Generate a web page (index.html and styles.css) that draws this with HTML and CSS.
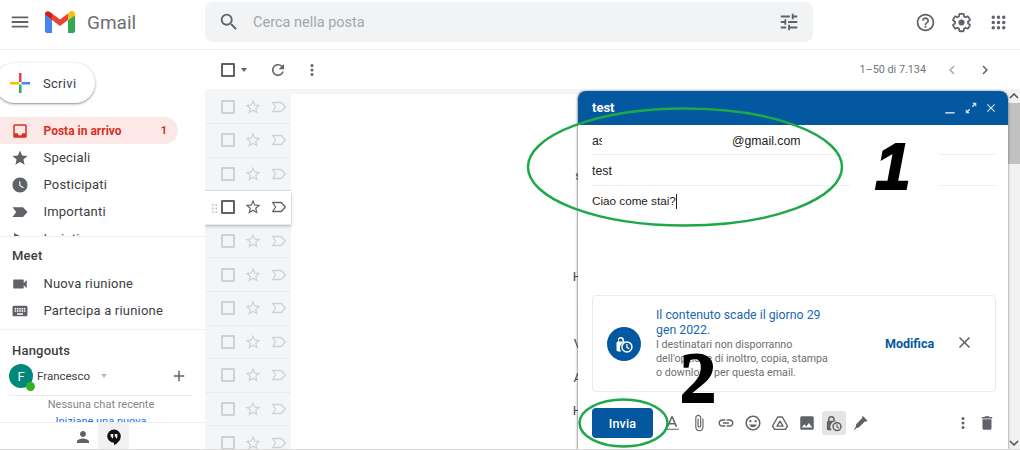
FILE: index.html
```html
<!DOCTYPE html>
<html lang="it">
<head>
<meta charset="utf-8">
<title>Gmail</title>
<link rel="stylesheet" href="styles.css">
</head>
<body>
<svg class="defs" width="0" height="0" aria-hidden="true">
  <symbol id="i-star" viewBox="0 0 24 24"><path d="M22 9.24l-7.19-.62L12 2 9.19 8.63 2 9.24l5.46 4.73L5.82 21 12 17.27 18.18 21l-1.63-7.03L22 9.24zM12 15.4l-3.76 2.27 1-4.28-3.32-2.88 4.38-.38L12 6.1l1.71 4.04 4.38.38-3.32 2.88 1 4.28L12 15.4z"/></symbol>
  <symbol id="i-label" viewBox="0 0 24 24"><path d="M3.5 6H15l5.5 6-5.500 6H3.500l4-6z" fill="none" stroke="currentColor" stroke-width="1.7" stroke-linejoin="round"/></symbol>
</svg>

<header class="topbar">
  <div class="brand">
    <svg class="ic menu" viewBox="0 0 24 24"><path d="M3 18h18v-2H3v2zm0-5h18v-2H3v2zm0-7v2h18V6H3z"/></svg>
    <svg class="logo" viewBox="0 0 30 22">
      <path fill="#4285f4" d="M2 22h5V9L0 4v16a2 2 0 0 0 2 2z"/>
      <path fill="#34a853" d="M23 22h5a2 2 0 0 0 2-2V4l-7 5z"/>
      <path fill="#ea4335" d="M7 9l8 6 8-6V2.500l-8 6-8-6z"/>
      <path fill="#fbbc04" d="M23 2.500V9l7-5V3c0-2.500-3-4-5-2.500z"/>
      <path fill="#c5221f" d="M0 4l7 5V2.500L5 1C3-.5 0 .5 0 3z"/>
    </svg>
    <span class="wordmark">Gmail</span>
  </div>
  <div class="search">
    <svg class="ic" viewBox="0 0 24 24"><path d="M15.500 14h-.79l-.28-.27A6.471 6.471 0 0 0 16 9.500 6.500 6.500 0 1 0 9.500 16c1.610 0 3.090-.59 4.230-1.570l.27.28v.79l5 4.990L20.490 19l-4.990-5zm-6 0C7.010 14 5 11.990 5 9.500S7.010 5 9.500 5 14 7.010 14 9.500 11.990 14 9.500 14z"/></svg>
    <span class="search-text">Cerca nella posta</span>
    <svg class="ic tune" viewBox="0 0 24 24"><path d="M3 17v2h6v-2H3zM3 5v2h10V5H3zm10 16v-2h8v-2h-8v-2h-2v6h2zM7 9v2H3v2h4v2h2V9H7zm14 4v-2H11v2h10zm-6-4h2V7h4V5h-4V3h-2v6z"/></svg>
  </div>
  <div class="top-actions">
    <svg class="ic" viewBox="0 0 24 24"><path d="M11 18h2v-2h-2v2zm1-16C6.480 2 2 6.480 2 12s4.480 10 10 10 10-4.480 10-10S17.520 2 12 2zm0 18c-4.410 0-8-3.590-8-8s3.590-8 8-8 8 3.590 8 8-3.590 8-8 8zm0-14c-2.210 0-4 1.790-4 4h2c0-1.100.9-2 2-2s2 .9 2 2c0 2-3 1.750-3 5h2c0-2.250 3-2.500 3-5 0-2.210-1.790-4-4-4z"/></svg>
    <svg class="ic" viewBox="0 0 24 24"><path fill="none" stroke="currentColor" stroke-width="2" d="M19.430 12.980c.04-.32.07-.64.07-.98s-.03-.66-.07-.98l2.110-1.650c.19-.15.24-.42.12-.64l-2-3.460c-.12-.22-.39-.3-.61-.22l-2.490 1c-.52-.4-1.080-.73-1.690-.98l-.38-2.650C14.460 2.180 14.250 2 14 2h-4c-.25 0-.46.18-.49.42l-.38 2.650c-.61.25-1.170.59-1.690.98l-2.490-1c-.23-.09-.49 0-.61.22l-2 3.460c-.13.22-.07.49.12.64l2.110 1.650c-.04.32-.07.65-.07.98s.03.66.07.98l-2.110 1.650c-.19.15-.24.42-.12.64l2 3.460c.12.22.39.3.61.22l2.490-1c.52.4 1.080.73 1.690.98l.38 2.650c.03.24.24.42.49.42h4c.25 0 .46-.18.49-.42l.38-2.650c.61-.25 1.170-.59 1.690-.98l2.490 1c.23.09.49 0 .61-.22l2-3.460c.12-.22.07-.49-.12-.64l-2.110-1.650z"/><circle cx="12" cy="12" r="3.500"/></svg>
    <svg class="ic" viewBox="0 0 24 24"><path d="M6 8a2 2 0 1 0 0-4 2 2 0 0 0 0 4zm6 0a2 2 0 1 0 0-4 2 2 0 0 0 0 4zm6 0a2 2 0 1 0 0-4 2 2 0 0 0 0 4zM6 14a2 2 0 1 0 0-4 2 2 0 0 0 0 4zm6 0a2 2 0 1 0 0-4 2 2 0 0 0 0 4zm6 0a2 2 0 1 0 0-4 2 2 0 0 0 0 4zM6 20a2 2 0 1 0 0-4 2 2 0 0 0 0 4zm6 0a2 2 0 1 0 0-4 2 2 0 0 0 0 4zm6 0a2 2 0 1 0 0-4 2 2 0 0 0 0 4z"/></svg>
  </div>
</header>

<div class="app">
  <aside class="sidebar">
    <div class="nav">
      <button class="compose-btn">
        <svg class="plus" viewBox="0 0 20 20">
          <path fill="#fbbc04" d="M0 9h9v2.500H0z"/>
          <path fill="#ea4335" d="M9 0h2.500v9H9z"/>
          <path fill="#4285f4" d="M11.500 9H20v2.500h-8.500z"/>
          <path fill="#34a853" d="M9 11.500h2.500V20H9z"/>
        </svg>
        <span>Scrivi</span>
      </button>
      <ul class="nav-list">
        <li class="nav-item active">
          <svg class="ic" viewBox="0 0 24 24"><path d="M19 3H5a2 2 0 0 0-2 2v14a2 2 0 0 0 2 2h14a2 2 0 0 0 2-2V5a2 2 0 0 0-2-2zm0 12h-4a3 3 0 0 1-6 0H5V5h14v10z"/></svg>
          <span class="grow">Posta in arrivo</span><span class="count">1</span>
        </li>
        <li class="nav-item">
          <svg class="ic" viewBox="0 0 24 24"><path d="M12 17.270L18.180 21l-1.640-7.030L22 9.240l-7.190-.61L12 2 9.190 8.630 2 9.240l5.460 4.730L5.820 21z"/></svg>
          <span>Speciali</span>
        </li>
        <li class="nav-item">
          <svg class="ic" viewBox="0 0 24 24"><path d="M11.990 2C6.470 2 2 6.480 2 12s4.470 10 9.990 10C17.520 22 22 17.520 22 12S17.520 2 11.990 2zM16.200 16.200L11 13V7h1.500v5.200l4.500 2.700-.8 1.300z"/></svg>
          <span>Posticipati</span>
        </li>
        <li class="nav-item">
          <svg class="ic" viewBox="0 0 24 24"><path d="M2 5.500h14l6 6.500-6 6.500H2l5-6.500z"/></svg>
          <span>Importanti</span>
        </li>
        <li class="nav-item">
          <svg class="ic" viewBox="0 0 24 24"><path d="M4 4l16 8-16 8v-6l10-2-10-2z"/></svg>
          <span>Inviati</span>
        </li>
      </ul>
    </div>
    <section class="meet">
      <h2 class="side-title">Meet</h2>
      <div class="nav-item">
        <svg class="ic" viewBox="0 0 24 24"><path d="M17 10.500V7c0-.55-.45-1-1-1H4c-.55 0-1 .45-1 1v10c0 .55.45 1 1 1h12c.55 0 1-.45 1-1v-3.500l4 4v-11l-4 4z"/></svg>
        <span>Nuova riunione</span>
      </div>
      <div class="nav-item">
        <svg class="ic" viewBox="0 0 24 24"><path d="M20 5H4c-1.100 0-1.990.9-1.990 2L2 17c0 1.100.9 2 2 2h16c1.100 0 2-.9 2-2V7c0-1.100-.9-2-2-2zm-9 3h2v2h-2V8zm0 3h2v2h-2v-2zM8 8h2v2H8V8zm0 3h2v2H8v-2zm-1 2H5v-2h2v2zm0-3H5V8h2v2zm9 7H8v-2h8v2zm0-4h-2v-2h2v2zm0-3h-2V8h2v2zm3 3h-2v-2h2v2zm0-3h-2V8h2v2z"/></svg>
        <span>Partecipa a riunione</span>
      </div>
    </section>
    <section class="hangouts">
      <h2 class="side-title">Hangouts</h2>
      <div class="user">
        <span class="avatar">F<i class="presence"></i></span>
        <span class="user-name">Francesco</span>
        <i class="caret"></i>
        <svg class="ic add" viewBox="0 0 24 24"><path d="M19 13h-6v6h-2v-6H5v-2h6V5h2v6h6v2z"/></svg>
      </div>
      <div class="chats">
        <p class="no-chat">Nessuna chat recente</p>
        <a class="new-chat">Iniziane una nuova</a>
      </div>
    </section>
    <div class="side-tabs">
      <span class="tab"><svg class="ic" viewBox="0 0 24 24"><path d="M12 12c2.210 0 4-1.790 4-4s-1.790-4-4-4-4 1.790-4 4 1.790 4 4 4zm0 2c-2.670 0-8 1.340-8 4v2h16v-2c0-2.660-5.330-4-8-4z"/></svg></span>
      <span class="tab current"><svg class="ic" viewBox="0 0 24 24"><path d="M12 2a9 9 0 0 0-9 9c0 5 4.500 8.500 9 8.500V23c4.500-2.500 9-6.500 9-12a9 9 0 0 0-9-9z"/><path fill="#f1f1f1" d="M7.500 8h3.500v3.500c0 1.500-1 2.500-2 2.500v-2.500H7.500zM13 8h3.500v3.500c0 1.500-1 2.500-2 2.500v-2.500H13z"/></svg></span>
    </div>
  </aside>

  <main class="main">
    <div class="toolbar">
      <i class="check dark"></i>
      <i class="caret dark-caret"></i>
      <svg class="ic refresh" viewBox="0 0 24 24"><path d="M17.650 6.350A7.958 7.958 0 0 0 12 4c-4.420 0-7.990 3.580-7.990 8s3.570 8 7.990 8c3.730 0 6.840-2.550 7.730-6h-2.080A5.990 5.990 0 0 1 12 18c-3.310 0-6-2.690-6-6s2.690-6 6-6c1.660 0 3.140.69 4.220 1.780L13 11h7V4l-2.350 2.350z"/></svg>
      <svg class="ic more" viewBox="0 0 24 24"><path d="M12 8a2 2 0 1 0 0-4 2 2 0 0 0 0 4zm0 2a2 2 0 1 0 0 4 2 2 0 0 0 0-4zm0 6a2 2 0 1 0 0 4 2 2 0 0 0 0-4z"/></svg>
      <span class="pager">1–50 di 7.134</span>
      <svg class="ic chev faded" viewBox="0 0 24 24"><path d="M15.410 7.410L14 6l-6 6 6 6 1.410-1.410L10.830 12z"/></svg>
      <svg class="ic chev" viewBox="0 0 24 24"><path d="M10 6L8.590 7.410 13.170 12l-4.580 4.590L10 18l6-6z"/></svg>
    </div>
    <div class="content">
      <div class="list">
        <div class="row"><i class="check"></i><svg class="ic star"><use href="#i-star"/></svg><svg class="ic lab"><use href="#i-label"/></svg></div>
        <div class="row"><i class="check"></i><svg class="ic star"><use href="#i-star"/></svg><svg class="ic lab"><use href="#i-label"/></svg></div>
        <div class="row"><i class="check"></i><svg class="ic star"><use href="#i-star"/></svg><svg class="ic lab"><use href="#i-label"/></svg></div>
        <div class="row hover"><i class="grip"></i><i class="check"></i><svg class="ic star"><use href="#i-star"/></svg><svg class="ic lab"><use href="#i-label"/></svg></div>
        <div class="row"><i class="check"></i><svg class="ic star"><use href="#i-star"/></svg><svg class="ic lab"><use href="#i-label"/></svg></div>
        <div class="row"><i class="check"></i><svg class="ic star"><use href="#i-star"/></svg><svg class="ic lab"><use href="#i-label"/></svg></div>
        <div class="row"><i class="check"></i><svg class="ic star"><use href="#i-star"/></svg><svg class="ic lab"><use href="#i-label"/></svg></div>
        <div class="row"><i class="check"></i><svg class="ic star"><use href="#i-star"/></svg><svg class="ic lab"><use href="#i-label"/></svg></div>
        <div class="row"><i class="check"></i><svg class="ic star"><use href="#i-star"/></svg><svg class="ic lab"><use href="#i-label"/></svg></div>
        <div class="row"><i class="check"></i><svg class="ic star"><use href="#i-star"/></svg><svg class="ic lab"><use href="#i-label"/></svg></div>
        <div class="row"><i class="check"></i><svg class="ic star"><use href="#i-star"/></svg><svg class="ic lab"><use href="#i-label"/></svg></div>
      </div>
      <div class="pane">
        <p>l</p><p></p><p>s</p><p></p><p></p><p>H</p><p>r</p><p>V</p><p>A</p><p>H</p>
      </div>
      <div class="scrollbar">
        <svg class="sb-arrow" viewBox="0 0 10 6"><path d="M1 5l4-4 4 4" fill="none" stroke="#505050" stroke-width="1.500"/></svg>
        <i class="sb-thumb"></i>
        <svg class="sb-arrow down" viewBox="0 0 10 6"><path d="M1 1l4 4 4-4" fill="none" stroke="#505050" stroke-width="1.500"/></svg>
      </div>
    </div>
  </main>
</div>

<section class="composer">
  <header class="composer-head">
    <span class="composer-title">test</span>
    <svg class="wc" viewBox="0 0 24 24"><path d="M4 19h16v2.500H4z"/></svg>
    <svg class="wc" viewBox="0 0 24 24"><path d="M14 3h7v7l-2.600-2.600-3.200 3.200-1.800-1.800 3.200-3.200zM10 21H3v-7l2.600 2.600 3.200-3.200 1.800 1.800-3.200 3.200z"/></svg>
    <svg class="wc" viewBox="0 0 24 24"><path d="M19 6.410L17.590 5 12 10.590 6.410 5 5 6.410 10.590 12 5 17.590 6.410 19 12 13.410 17.590 19 19 17.590 13.410 12z"/></svg>
  </header>
  <div class="composer-body">
    <div class="field"><span class="to-start">as</span><span>@gmail.com</span></div>
    <div class="field subject">test</div>
    <div class="message"><span>Ciao come stai?</span><i class="cursor"></i></div>
    <div class="notice">
      <span class="notice-icon">
        <svg viewBox="0 0 24 24"><path fill="#fff" d="M8 3.500a4 4 0 0 1 4 4V9h1a2 2 0 0 1 1.500.7 7 7 0 0 0-5.800 11.300H5a2 2 0 0 1-2-2V11a2 2 0 0 1 2-2h.0V7.500a3 3 0 0 1 3-4zm0 1.800A2.200 2.200 0 0 0 5.800 7.500V9h4.400V7.500A2.200 2.200 0 0 0 8 5.300z"/><circle cx="15.500" cy="15.500" r="6" fill="none" stroke="#fff" stroke-width="1.800"/><path fill="none" stroke="#fff" stroke-width="1.500" d="M15.500 12v4l2.800 1.500"/></svg>
      </span>
      <div class="notice-text">
        <p class="notice-title">Il contenuto scade il giorno 29 gen 2022.</p>
        <p class="notice-desc">I destinatari non disporranno dell'opzione di inoltro, copia, stampa o download per questa email.</p>
      </div>
      <span class="notice-link">Modifica</span>
      <svg class="notice-close" viewBox="0 0 24 24"><path d="M19 6.410L17.590 5 12 10.590 6.410 5 5 6.410 10.590 12 5 17.590 6.410 19 12 13.410 17.590 19 19 17.590 13.410 12z"/></svg>
    </div>
    <div class="actions">
      <button class="send">Invia</button>
      <span class="tool"><svg viewBox="0 0 24 24"><path d="M11 3h2l6 14h-2.300l-1.300-3H8.600l-1.300 3H5zm-1.600 9h5.200L12 5.800zM3 19.500h18V21H3z"/></svg></span>
      <span class="tool"><svg viewBox="0 0 24 24"><path d="M16.500 6v11.500c0 2.210-1.790 4-4 4s-4-1.790-4-4V5a2.500 2.500 0 0 1 5 0v10.500c0 .55-.45 1-1 1s-1-.45-1-1V6H10v9.500a2.500 2.500 0 0 0 5 0V5c0-2.210-1.790-4-4-4S7 2.790 7 5v12.500c0 3.040 2.460 5.500 5.500 5.500s5.500-2.460 5.500-5.500V6h-1.500z"/></svg></span>
      <span class="tool"><svg viewBox="0 0 24 24"><path d="M3.900 12c0-1.710 1.390-3.100 3.100-3.100h4V7H7c-2.760 0-5 2.240-5 5s2.240 5 5 5h4v-1.900H7c-1.710 0-3.100-1.390-3.100-3.100zM8 13h8v-2H8v2zm9-6h-4v1.900h4c1.710 0 3.100 1.390 3.100 3.100s-1.390 3.100-3.100 3.100h-4V17h4c2.760 0 5-2.240 5-5s-2.240-5-5-5z"/></svg></span>
      <span class="tool"><svg viewBox="0 0 24 24"><path d="M11.990 2C6.470 2 2 6.480 2 12s4.470 10 9.990 10C17.520 22 22 17.520 22 12S17.520 2 11.990 2zM12 20c-4.420 0-8-3.580-8-8s3.580-8 8-8 8 3.580 8 8-3.580 8-8 8zm3.500-9c.83 0 1.500-.67 1.500-1.500S16.330 8 15.500 8 14 8.670 14 9.500s.67 1.500 1.500 1.500zm-7 0c.83 0 1.500-.67 1.500-1.500S9.330 8 8.500 8 7 8.670 7 9.500 7.670 11 8.500 11zm3.500 6.500c2.330 0 4.310-1.460 5.110-3.500H6.890c.8 2.040 2.780 3.500 5.110 3.500z"/></svg></span>
      <span class="tool"><svg viewBox="0 0 24 24"><path fill="none" stroke="currentColor" stroke-width="1.900" stroke-linejoin="round" d="M9 4h6l7 12-3 4.500H5L2 16zM12 9.500l-4 6.700h8z"/></svg></span>
      <span class="tool"><svg viewBox="0 0 24 24"><path d="M21 19V5c0-1.100-.9-2-2-2H5c-1.100 0-2 .9-2 2v14c0 1.100.9 2 2 2h14c1.100 0 2-.9 2-2zM8.500 13.500l2.500 3.010L14.500 12l4.500 6H5l3.500-4.500z"/></svg></span>
      <span class="tool selected"><svg viewBox="0 0 24 24"><path d="M8.500 2.500a4.500 4.500 0 0 1 4.500 4.500v2h1a2 2 0 0 1 1.700 1 7 7 0 0 0-6.700 11.500H4.500a2 2 0 0 1-2-2V11a2 2 0 0 1 2-2H4V7a4.500 4.500 0 0 1 4.500-4.500zm0 2A2.500 2.500 0 0 0 6 7v2h5V7a2.500 2.500 0 0 0-2.500-2.500z"/><path d="M16 10.500a6.250 6.250 0 1 1 0 12.500 6.250 6.250 0 0 1 0-12.500zm0 2a4.250 4.250 0 1 0 0 8.500 4.250 4.250 0 0 0 0-8.500zm-.8 1.300h1.500v3l2.300 1.400-.7 1.100-3.100-1.800z"/></svg></span>
      <span class="tool"><svg viewBox="0 0 24 24"><path d="M15.500 3.500l5 5-2 2-1-1-8.500 8.500L6 18.500l-3 3-.5-.5 2.500-4 .5-3.500L14 5l-1-1 1.500-1.500z"/></svg></span>
      <span class="tool push"><svg viewBox="0 0 24 24"><path d="M12 8a2 2 0 1 0 0-4 2 2 0 0 0 0 4zm0 2a2 2 0 1 0 0 4 2 2 0 0 0 0-4zm0 6a2 2 0 1 0 0 4 2 2 0 0 0 0-4z"/></svg></span>
      <span class="tool"><svg viewBox="0 0 24 24"><path d="M6 19c0 1.100.9 2 2 2h8c1.100 0 2-.9 2-2V7H6v12zM19 4h-3.500l-1-1h-5l-1 1H5v2h14V4z"/></svg></span>
    </div>
  </div>
</section>

<div class="erase"></div>
<svg class="rings" viewBox="0 0 1020 450">
  <ellipse cx="685" cy="167" rx="157" ry="58.500"/>
  <ellipse cx="623.500" cy="423" rx="44" ry="23.500"/>
</svg>
<span class="mark mark-one">1</span>
<span class="mark mark-two">2</span>
<div class="edge-line"></div>
</body>
</html>
```

FILE: styles.css
```css
* { box-sizing: border-box; }
html, body { margin: 0; height: 100%; }
body {
  width: 1020px;
  height: 450px;
  overflow: hidden;
  position: relative;
  background: #fff;
  font-family: Roboto, "Liberation Sans", sans-serif;
  font-size: 13px;
  color: #3c4043;
}
p, h2, ul { margin: 0; padding: 0; }
ul { list-style: none; }
i { display: block; font-style: normal; }
.defs { position: absolute; }
.ic { width: 24px; height: 24px; fill: currentColor; color: #5f6368; flex: none; display: block; }

/* top bar */
.topbar {
  height: 50px;
  display: flex;
  align-items: center;
  padding-bottom: 5px;
  border-bottom: 1px solid #eceef0;
}
.topbar .ic { width: 22px; height: 22px; }
.brand { width: 205px; display: flex; align-items: center; flex: none; }
.topbar .menu { margin-left: 9px; }
.logo { width: 30px; height: 22px; margin-left: 14px; }
.wordmark { margin-left: 12px; font-size: 19px; color: #6b6f73; }
.search {
  width: 608px;
  height: 40px;
  background: #f1f3f4;
  border-radius: 8px;
  display: flex;
  align-items: center;
  padding: 0 13px;
}
.search-text { margin-left: 13px; font-size: 14.500px; color: #a4a7aa; flex: 1; }
.top-actions {
  margin-left: 101.500px;
  display: flex;
  gap: 15.500px;
}
.topbar .top-actions .ic { width: 21px; height: 21px; }

/* layout */
.app { display: flex; height: 400px; }
.sidebar { width: 205px; flex: none; display: flex; flex-direction: column; }
.nav { height: 187px; overflow: hidden; flex: none; padding-top: 13px; border-bottom: 1px solid #eceef0; }
.compose-btn {
  margin-left: -5px;
  width: 100px;
  height: 40px;
  border: 0;
  border-radius: 20px;
  background: #fff;
  box-shadow: 0 1px 3px rgba(60,64,67,.45), 0 1px 1px rgba(60,64,67,.2);
  display: flex;
  align-items: center;
  padding: 0 0 0 15px;
  font: 400 13px Roboto, sans-serif;
  letter-spacing: .3px;
  color: #3c4043;
}
.plus { width: 20px; height: 20px; margin-right: 13px; }
.nav-list { margin-top: 14px; width: 178px; }
.nav-item {
  height: 27px;
  display: flex;
  align-items: center;
  padding-left: 11px;
  font-size: 13px;
  letter-spacing: .2px;
  color: #3c4043;
}
.nav-item .ic { width: 18px; height: 18px; margin-right: 14.500px; margin-left: 0; flex: none; }
.nav-item.active {
  background: #fce8e6;
  border-radius: 0 14px 14px 0;
  color: #d93025;
  font-size: 12px;
  letter-spacing: 0;
  font-weight: 700;
}
.nav-item.active .ic { color: #d93025; }
.grow { flex: 1; }
.count { font-size: 11px; margin-right: 11px; }
.meet { height: 93px; flex: none; border-bottom: 1px solid #f0f1f2; }
.side-title {
  font-size: 13px;
  font-weight: 500;
  color: #3c4043;
  letter-spacing: .2px;
  padding: 11px 0 0 12px;
  height: 33px;
}
.hangouts { height: 92px; flex: none; overflow: hidden; }
.hangouts .side-title { padding-top: 13px; }
.user { display: flex; align-items: center; padding-left: 9px; height: 32px; margin-top: -3px; }
.avatar {
  width: 24px;
  height: 24px;
  border-radius: 50%;
  background: #00897b;
  color: #fff;
  font-size: 13px;
  display: flex;
  align-items: center;
  justify-content: center;
  position: relative;
  flex: none;
}
.presence {
  position: absolute;
  right: -2px;
  bottom: -3px;
  width: 9px;
  height: 9px;
  border-radius: 50%;
  background: #34b320;
}
.user-name { margin-left: 4px; font-size: 11.500px; width: 64px; color: #3c4043; }
.caret { width: 0; height: 0; border: 3.500px solid transparent; border-top: 4px solid #b5b7b9; border-bottom: 0; }
.add { width: 18px; height: 18px; margin-left: 63px; }
.chats { margin: 3px 12px 0 9px; border-top: 1px solid #e8eaed; text-align: center; font-size: 11px; line-height: 16px; padding-top: 1px; }
.no-chat { color: #80868b; }
.new-chat { display: block; margin-top: 1px; color: #1a73e8; }
.side-tabs { height: 28px; border-top: 1px solid #eceef0; display: flex; padding-left: 67px; flex: none; }
.tab { width: 31px; display: flex; align-items: center; justify-content: center; }
.tab .ic { width: 18px; height: 18px; }
.tab.current { background: #f1f1f1; }
.tab.current .ic { color: #111; }

.main { flex: 1; display: flex; flex-direction: column; min-width: 0; }
.toolbar { height: 39px; display: flex; align-items: center; padding-left: 16px; flex: none; }
.check { width: 14px; height: 14px; border: 2px solid #cfd1d2; border-radius: 1px; flex: none; }
.check.dark { border-color: #5f6368; }
.dark-caret { border-top-color: #5f6368; margin-left: 6px; }
.refresh { width: 18px; height: 18px; margin-left: 22px; }
.more { width: 18px; height: 18px; margin-left: 16px; }
.pager { margin-left: auto; margin-right: 17px; font-size: 10.800px; color: #70757a; }
.chev { width: 18px; height: 18px; margin-right: 15px; }
.chev.faded { color: #a8abae; }
.chev:last-child { margin-right: 26px; }
.content { flex: 1; display: flex; overflow: hidden; background: #f4f5f6; min-height: 0; }
.list { width: 86px; flex: none; }
.row {
  height: 33.600px;
  display: flex;
  align-items: center;
  padding-left: 16px;
  border-bottom: 1px solid #eaebec;
  position: relative;
}
.row:first-child { height: 35px; padding-top: 2px; }
.row .star { width: 18px; height: 18px; margin-left: 9px; color: #cfd1d2; }
.row .lab { width: 18px; height: 18px; margin-left: 8px; color: #cfd1d2; }
.row.hover { background: #fff; box-shadow: 0 1px 3px rgba(60,64,67,.4); z-index: 1; }
.row.hover .check { border-color: #5f6368; }
.row.hover .star, .row.hover .lab { color: #5f6368; }
.grip {
  position: absolute;
  left: 6px;
  top: 12px;
  width: 7px;
  height: 11px;
  background: radial-gradient(circle, #c4c6c8 1px, transparent 1.200px) 0 0 / 3.500px 3.700px;
}
.pane { flex: 1; background: #fff; margin-top: 5px; }
.pane p { height: 33.600px; width: 291px; text-align: right; line-height: 30px; font-size: 13px; color: #444; }
.scrollbar {
  width: 12px;
  flex: none;
  background: #f1f1f1;
  display: flex;
  flex-direction: column;
  align-items: center;
}
.sb-arrow { width: 10px; height: 6px; flex: none; margin-top: 4px; }
.sb-thumb { width: 100%; height: 61px; background: #c1c1c1; margin-top: 4px; }
.sb-arrow.down { margin-top: auto; margin-bottom: 4px; }

/* compose window */
.composer {
  position: absolute;
  left: 578px;
  top: 91px;
  width: 430px;
  height: 359px;
  background: #fff;
  border-radius: 8px 8px 0 0;
  box-shadow: -1px 0 2px rgba(60,64,67,.5), 1px 0 2px rgba(60,64,67,.3);
  display: flex;
  flex-direction: column;
}
.composer-head {
  height: 34px;
  flex: none;
  background: #03589f;
  border-radius: 8px 8px 0 0;
  display: flex;
  align-items: center;
  padding: 0 10px 0 14px;
  gap: 6.500px;
  color: #fff;
}
.composer-title { font-weight: 700; font-size: 13px; flex: 1; margin-top: -1px; }
.wc { width: 14px; height: 14px; fill: #cfe0ef; }
.composer-body { flex: 1; display: flex; flex-direction: column; padding: 0 12px 0 14px; min-height: 0; }
.field {
  height: 30px;
  flex: none;
  display: flex;
  align-items: center;
  padding-top: 2px;
  border-bottom: 1px solid #eff0f1;
  font: 12.300px "Liberation Sans", sans-serif;
  color: #222;
}
.field.subject { height: 31px; padding-top: 1px; }
.to-start { width: 10px; flex: none; overflow: hidden; margin-right: 130px; }
.message {
  padding-top: 8px;
  height: 109px;
  flex: none;
  display: flex;
  align-items: flex-start;
  color: #222;
  font: 11.700px "Liberation Sans", sans-serif;
}
.cursor { width: 1px; height: 15px; background: #222; }
.notice {
  height: 97px;
  flex: none;
  border: 1px solid #e8eaed;
  border-radius: 4px;
  display: flex;
  align-items: center;
  padding-left: 14px;
}
.notice-icon {
  width: 34px;
  height: 34px;
  border-radius: 50%;
  background: #03589f;
  display: flex;
  align-items: center;
  justify-content: center;
  flex: none;
}
.notice-icon svg { width: 20px; height: 20px; }
.notice-text { width: 180px; margin-left: 15px; flex: none; padding-top: 1px; }
.notice-title { font-size: 12.300px; line-height: 15px; color: #1a67ad; }
.notice-desc { font-size: 10.700px; line-height: 14px; color: #6b6f73; width: 176px; }
.notice-link { margin-left: 49px; font-weight: 700; color: #03589f; font-size: 12.500px; }
.notice-close { width: 19px; height: 19px; fill: #5f6368; margin-left: 21px; margin-top: -2px; }
.actions { display: flex; align-items: center; margin: 16px -4px 0 0; }
.send {
  width: 61px;
  height: 30px;
  border: 0;
  border-radius: 4px;
  background: #03589f;
  color: #fff;
  font: 500 12.500px Roboto, sans-serif;
  letter-spacing: .2px;
  margin-right: 6px;
}
.tool { width: 26.900px; height: 24px; display: flex; align-items: center; justify-content: center; flex: none; color: #5f6368; border-radius: 3px; }
.tool svg { width: 18px; height: 18px; fill: currentColor; }
.tool.selected { background: #e4e4e4; width: 24px; margin: 0 1.500px; }
.push { margin-left: auto; margin-right: -3px; }

/* annotations */
.erase { position: absolute; left: 850px; top: 150px; width: 89px; height: 40px; background: #fff; }
.rings { position: absolute; left: 0; top: 0; width: 1020px; height: 450px; fill: none; stroke: #1fa84a; stroke-width: 2.500px; }
.mark { position: absolute; color: #000; line-height: 1; -webkit-text-stroke: 2px #000; }
.mark-one { left: 875px; top: 135px; font: italic 700 64px/1 "Liberation Sans", sans-serif; }
.mark-two { left: 680px; top: 342px; font: 700 72px/1 "Liberation Serif", serif; }
.edge-line { position: absolute; left: 0; right: 0; bottom: 0; height: 1px; background: #dadada; }
```
